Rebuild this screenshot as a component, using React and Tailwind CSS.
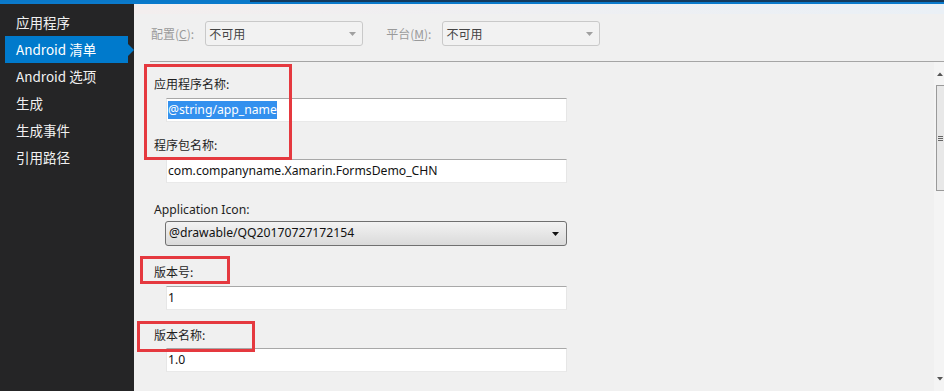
import React from "react";

const cjk = { fontFamily: '"Noto Sans CJK SC", "Noto Sans", sans-serif' };
const latin = { fontFamily: '"Noto Sans", "Noto Sans CJK SC", sans-serif' };

function SideItem({ children, active }) {
  if (active) {
    return (
      <div className="relative ml-[5px] flex h-[27px] w-[123px] items-center bg-[#007acc] pl-[11px] text-[13.5px] text-white">
        {children}
        <div className="absolute right-[-6px] top-[8px] h-0 w-0 border-y-[6px] border-l-[6px] border-y-transparent border-l-[#007acc]" />
      </div>
    );
  }
  return (
    <div className="flex h-[27px] items-center pl-[16px] text-[13.5px] text-[#f1f1f1]">{children}</div>
  );
}

function ToolSelect({ label, u, rest }) {
  return (
    <div className="flex items-center">
      <span className="text-[12px] text-[#9a9a9a]" style={cjk}>
        {label}(<u>{u}</u>){rest}
      </span>
      <div className="ml-[11px] flex h-[25px] w-[158px] items-center justify-between rounded-[3px] border border-[#c9c9c9] bg-[#f2f2f2] pl-[3px] pr-[6px]">
        <span className="text-[12px] text-[#444]" style={cjk}>不可用</span>
        <svg width="7" height="4" viewBox="0 0 7 4"><path d="M0 0h7L3.5 4z" fill="#a0a0a0" /></svg>
      </div>
    </div>
  );
}

function Label({ children, className = "" }) {
  return (
    <div className={"ml-[20px] h-[16px] text-[12px] leading-[16px] text-[#1e1e1e] " + className} style={cjk}>
      {children}
    </div>
  );
}

function TextBox({ children, className = "" }) {
  return (
    <div
      className={
        "ml-[32px] flex h-[24px] w-[401px] items-center border-t border-t-[#a8a8a8] border-x border-x-[#e6e6e6] border-b border-b-[#e9e9e9] bg-white pl-[1px] text-[12.2px] text-[#111] " +
        className
      }
      style={latin}
    >
      {children}
    </div>
  );
}

export default function App() {
  return (
    <div className="flex h-[391px] w-[944px] flex-col overflow-hidden bg-[#f0f0f0]">
      <div className="flex h-[2px]">
        <div className="w-[250px] bg-[#0a78c8]" />
        <div className="flex-1 bg-[#133a5e]" />
      </div>
      <div className="h-[2px] bg-[#0a7acc]" />
      <div className="flex flex-1">
        <div className="w-[134px] shrink-0 bg-[#252526] pt-[5px]" style={cjk}>
          <SideItem>应用程序</SideItem>
          <SideItem active>Android 清单</SideItem>
          <SideItem>Android 选项</SideItem>
          <SideItem>生成</SideItem>
          <SideItem>生成事件</SideItem>
          <SideItem>引用路径</SideItem>
        </div>
        <div className="relative flex flex-1 flex-col">
          <div className="h-[10px] bg-gradient-to-r from-[#f3eeee] to-[#eaf0f6]" />
          <div className="flex items-center gap-[23px] pl-[17px] pt-[7px]">
            <ToolSelect label="配置" u="C" rest=":" />
            <ToolSelect label="平台" u="M" rest=":" />
          </div>
          <div className="ml-[16px] mt-[15px] h-[1px] bg-[#a5a5a5]" />
          <div className="relative flex flex-1">
            <div className="flex flex-1 flex-col">
              <Label className="mt-[14px]">应用程序名称:</Label>
              <TextBox className="mt-[6px]">
                <span className="bg-[#3390ee] text-white">@string/app_name</span>
              </TextBox>
              <Label className="mt-[15px]">程序包名称:</Label>
              <TextBox className="mt-[6px]">com.companyname.Xamarin.FormsDemo_CHN</TextBox>
              <Label className="mt-[18px]">
                <span style={latin} className="text-[12.2px]">Application Icon:</span>
              </Label>
              <div
                className="ml-[31px] mt-[4px] flex h-[25px] w-[402px] items-center justify-between rounded-[3px] border border-[#707070] bg-gradient-to-b from-[#f3f3f3] to-[#dadada] pl-[3px] pr-[7px] text-[12.2px] text-[#111]"
                style={latin}
              >
                <span>@drawable/QQ20170727172154</span>
                <svg width="7" height="4" viewBox="0 0 7 4"><path d="M0 0h7L3.5 4z" fill="#111" /></svg>
              </div>
              <Label className="mt-[18px]">版本号:</Label>
              <TextBox className="mt-[6px]">1</TextBox>
              <Label className="mt-[17px]">版本名称:</Label>
              <TextBox className="mt-[5px]">1.0</TextBox>
            </div>
            <div className="flex w-[10px] shrink-0 flex-col bg-[#f4f4f4] pl-[2px] pt-[9px]">
              <svg width="8" height="6" viewBox="0 0 8 6"><path d="M1 5L4 1.5 7 5z" fill="#555" /></svg>
              <div className="mt-[8px] flex h-[106px] w-[8px] items-center justify-center border border-r-0 border-[#9a9a9a] bg-[#e8e8e8]">
                <div className="flex flex-col gap-[1px]">
                  <div className="h-[1px] w-[5px] bg-[#666]" />
                  <div className="h-[1px] w-[5px] bg-[#666]" />
                  <div className="h-[1px] w-[5px] bg-[#666]" />
                </div>
              </div>
              <div className="flex-1" />
              <svg className="mb-[9px]" width="8" height="6" viewBox="0 0 8 6"><path d="M1 1L4 4.5 7 1z" fill="#555" /></svg>
            </div>
            <div className="pointer-events-none absolute left-[10px] top-[2px] h-[96px] w-[148px] border-[3px] border-[#e5393f]" />
            <div className="pointer-events-none absolute left-[6px] top-[194px] h-[28px] w-[90px] border-[3px] border-[#e5393f]" />
            <div className="pointer-events-none absolute left-[3px] top-[259px] h-[31px] w-[118px] border-[3px] border-[#e5393f]" />
          </div>
        </div>
      </div>
    </div>
  );
}
